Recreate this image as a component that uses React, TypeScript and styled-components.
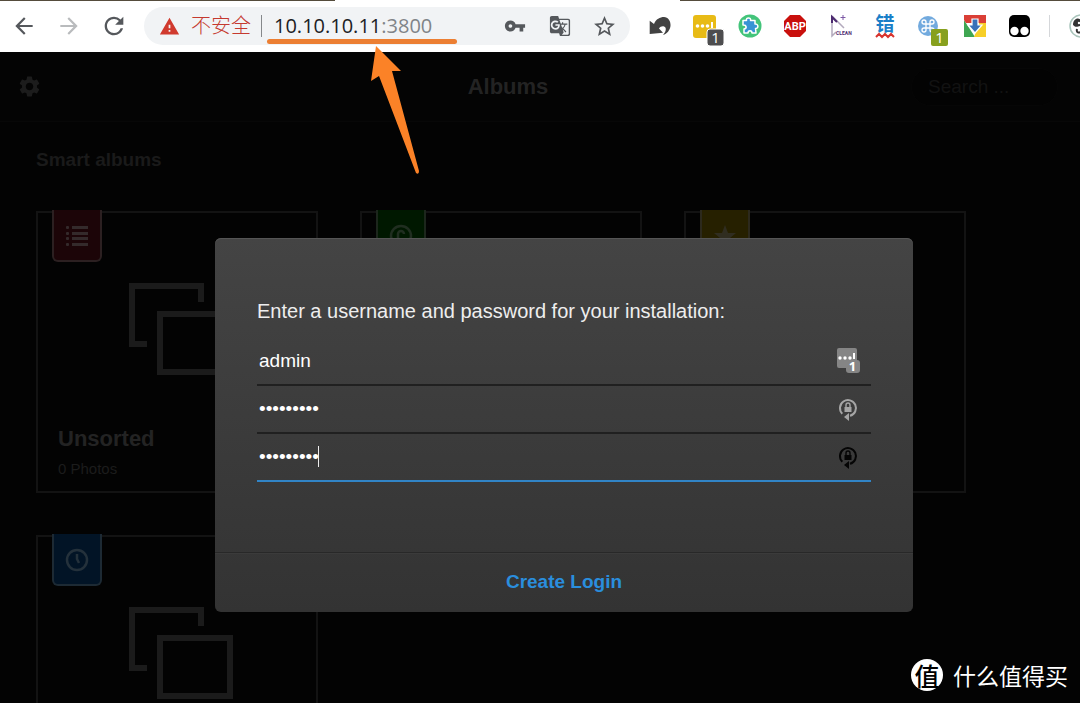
import React from "react";
import styled, { createGlobalStyle } from "styled-components";
import {
  MdArrowBack,
  MdArrowForward,
  MdGTranslate,
  MdRefresh,
  MdSettings,
  MdStarBorder,
  MdVpnKey,
  MdWarning,
} from "react-icons/md";

const GlobalStyle = createGlobalStyle`
  * { box-sizing: border-box; }
  html, body, #root { height: 100%; }
  body {
    margin: 0;
    overflow: hidden;
    background: #030303;
    font-family: "Liberation Sans", Arial, sans-serif;
  }
  button, input { font-family: inherit; }
  h1, h2, h3, p { margin: 0; }
  svg { display: block; flex: none; overflow: visible; }
`;

const Shell = styled.div`
  position: relative;
  display: flex;
  flex-direction: column;
  height: 100%;
  overflow: hidden;
`;

/* ---------- browser chrome ---------- */

const TabEdge = styled.div`
  display: flex;
  justify-content: space-between;
  height: 1px;
  background: #fff;
`;

const TabShade = styled.span<{ $share: number }>`
  width: ${(p) => p.$share}%;
  background: #554c3c;
`;

const Toolbar = styled.div`
  display: flex;
  align-items: center;
  flex: none;
  height: 51px;
  padding: 0 0 1px 1px;
  background: #fff;
  overflow: hidden;
`;

const ToolButton = styled.button<{ $tone?: string }>`
  display: flex;
  align-items: center;
  justify-content: center;
  flex: none;
  width: 45px;
  height: 40px;
  padding: 0;
  border: 0;
  background: none;
  color: ${(p) => p.$tone ?? "#55585c"};
`;

const AddressBar = styled.div`
  display: flex;
  align-items: center;
  flex: 1;
  min-width: 0;
  height: 38px;
  margin: 0 7px 0 8px;
  padding: 0 3px 0 15px;
  border-radius: 19px;
  background: #f1f3f5;
  font: 20px/38px "Open Sans", "Noto Sans CJK SC", sans-serif;
  white-space: nowrap;
`;

const Insecure = styled.span`
  margin-left: 11px;
  color: #c5392f;
  font-weight: 300;
`;

const AddressRule = styled.span`
  width: 1px;
  height: 22px;
  margin: 0 12px 0 10px;
  background: #85888b;
`;

const Address = styled.span`
  flex: 1;
  color: #202124;
`;

const Port = styled.span`
  color: #808488;
`;

const ToolDivider = styled.span`
  flex: none;
  width: 1px;
  height: 22px;
  margin: 0 19px 0 7px;
  background: #d5d7da;
`;

const AvatarButton = styled.button`
  flex: none;
  width: 11px;
  height: 24px;
  padding: 0;
  border: 0;
  background: none;
  overflow: hidden;
`;

/* ---------- gallery page ---------- */

const Gallery = styled.div`
  position: relative;
  flex: 1;
  min-height: 0;
  overflow: hidden;
  background: #030303;
`;

const GalleryHeader = styled.header`
  display: flex;
  align-items: center;
  height: 70px;
  padding-right: 22px;
  border-bottom: 1px solid #070707;
  background: #040404;
`;

const SettingsButton = styled.button`
  display: flex;
  width: 105px;
  padding: 0 0 0 17px;
  border: 0;
  background: none;
  color: #1c1c1c;
`;

const GalleryTitle = styled.h1`
  flex: 1;
  color: #232323;
  font-size: 22px;
  line-height: 30px;
  text-align: center;
`;

const SearchBox = styled.input`
  width: 147px;
  height: 38px;
  padding: 0 16px;
  border: 1px solid #060606;
  border-radius: 19px;
  background: #030303;
  color: #121212;
  font-size: 19px;
  &::placeholder { color: #121212; opacity: 1; }
`;

const Albums = styled.main`
  padding: 23px 36px 0;
`;

const SectionTitle = styled.h2`
  color: #1a1a1a;
  font-size: 19px;
  line-height: 30px;
`;

const AlbumGrid = styled.div`
  display: grid;
  grid-template-columns: repeat(auto-fill, 282px);
  gap: 42px;
  margin-top: 36px;
`;

const AlbumCard = styled.article`
  position: relative;
  height: 282px;
  padding: 70px 20px 0;
  border: 2px solid #131313;
  background: #030303;
`;

const AlbumArt = styled.svg`
  margin-left: 71px;
`;

const AlbumName = styled.h3`
  margin-top: 49px;
  color: #232323;
  font-size: 22px;
  line-height: 30px;
`;

const AlbumCount = styled.p`
  margin-top: 3px;
  color: #1c1c1c;
  font-size: 15px;
  line-height: 24px;
`;

const AlbumBadge = styled.span<{ $fill: string; $edge: string }>`
  position: absolute;
  top: -3px;
  left: 14px;
  display: flex;
  align-items: center;
  justify-content: center;
  width: 50px;
  height: 52px;
  padding-top: 2px;
  border: 2px solid ${(p) => p.$edge};
  border-top: 0;
  border-radius: 0 0 6px 6px;
  background: ${(p) => p.$fill};
`;

/* ---------- dialog ---------- */

const Overlay = styled.div`
  position: absolute;
  inset: 0;
  display: flex;
  align-items: flex-start;
  justify-content: center;
  padding: 186px 0 0 48px;
`;

const Dialog = styled.form`
  width: 100%;
  max-width: 698px;
  border-radius: 6px;
  background: linear-gradient(#444, #333);
  box-shadow: inset 0 1px 0 #555;
`;

const DialogBody = styled.div`
  height: 314px;
  padding: 58px 42px 0;
`;

const Prompt = styled.p`
  color: #eee;
  font-size: 20px;
  line-height: 30px;
`;

const Fields = styled.div`
  margin-top: 12px;
`;

const Field = styled.label<{ $active?: boolean }>`
  position: relative;
  display: flex;
  align-items: center;
  height: 48px;
  padding-right: 11px;
  border-bottom: 2px solid ${(p) => (p.$active ? "#3184c6" : "#202020")};
`;

const FieldInput = styled.input`
  flex: 1;
  min-width: 0;
  height: 40px;
  padding: 0 2px;
  border: 0;
  outline: 0;
  background: none;
  color: #fff;
  caret-color: transparent;
  font-size: 19px;
`;

const Caret = styled.span`
  position: absolute;
  top: 12px;
  left: 61px;
  width: 1px;
  height: 21px;
  background: #eee;
`;

const SubmitButton = styled.button`
  display: block;
  width: 100%;
  height: 60px;
  padding: 0 0 2px;
  border: 0;
  border-top: 1px solid #282828;
  border-radius: 0 0 6px 6px;
  box-shadow: inset 0 1px 0 #3b3b3b;
  background: none;
  color: #2a8edd;
  font-size: 19px;
  font-weight: bold;
`;

/* ---------- annotations over the page ---------- */

const Pointer = styled.svg`
  position: absolute;
  top: 38px;
  left: 266px;
`;

const Watermark = styled.div`
  position: absolute;
  right: 12px;
  bottom: 11px;
  display: flex;
  align-items: center;
  gap: 10px;
  color: #fff;
  font: 23px/34px "Noto Sans CJK SC", sans-serif;
`;

const Seal = styled.span`
  display: flex;
  align-items: center;
  justify-content: center;
  width: 32px;
  height: 32px;
  border-radius: 50%;
  background: #fff;
  color: #000;
  font-size: 25px;
  font-weight: 500;
`;

const cjk = '"Noto Sans CJK SC", sans-serif';

const UndoIcon = () => (
  <svg width="24" height="24" viewBox="0 0 24 24">
    <path
      d="M1.700 6.700 6 10C8 5 12 3 16 3C20 3 23 7 22.500 12C22 16 19 20 15 21C18 18 19 13.500 16 12.500C14 12 12 13 11 14.500L15 18.700 1.700 20Z"
      fill="#424242"
    />
  </svg>
);

const PasswordsIcon = () => (
  <svg width="34" height="34" viewBox="-2 -3 34 34">
    <rect x="3" y="3" width="23" height="23" rx="3" fill="#e8bb16" />
    <g fill="#fff">
      <circle cx="7.500" cy="14" r="1.800" />
      <circle cx="12.500" cy="14" r="1.800" />
      <circle cx="17.500" cy="14" r="1.800" />
      <rect x="21" y="10" width="2" height="6" />
    </g>
    <rect x="17" y="17" width="17" height="17" rx="3" fill="#4d4d4f" stroke="#fff" />
    <text x="25.500" y="31" textAnchor="middle" fill="#fff" fontSize="15" fontFamily="Open Sans, sans-serif">1</text>
  </svg>
);

const PuzzleIcon = () => (
  <svg width="24" height="24" viewBox="0 0 24 24">
    <circle cx="12" cy="12" r="11.500" fill="#43c47a" />
    <path
      d="M5 6.500H8.500C7.500 3 13.500 3 12.500 6.500H17V10C20.500 9.500 21 14.500 17.500 14.500L18 19H14C14 16 10 16 10 19H6V15C9 14.500 9 11 5 11Z"
      fill="#3793d5"
      stroke="#fff"
      strokeWidth="1.500"
      strokeLinejoin="round"
    />
  </svg>
);

const AdblockIcon = () => (
  <svg width="24" height="24" viewBox="0 0 24 24">
    <path d="M7 1H17L23 7V17L17 23H7L1 17V7Z" fill="#c9100d" />
    <text x="12" y="16" textAnchor="middle" fill="#fff" fontSize="11" fontWeight="700" fontFamily="Roboto, sans-serif">ABP</text>
  </svg>
);

const CleanIcon = () => (
  <svg width="24" height="24" viewBox="0 0 24 24">
    <path d="M4 2V22L8 18M4 2 16 14" fill="none" stroke="#b3aabd" strokeWidth="1.500" />
    <path d="M4 9V3L9 8" fill="none" stroke="#4c2a70" strokeWidth="2" />
    <path d="M15 1V6M12.500 3.500H17.500" stroke="#7c58a5" />
    <text x="8" y="21" fill="#4c2a70" fontSize="5" fontWeight="700" fontFamily="Roboto, sans-serif">CLEAN</text>
  </svg>
);

const TypoIcon = () => (
  <svg width="24" height="24" viewBox="0 0 24 24">
    <text x="12" y="17" textAnchor="middle" fill="#1a7fc8" fontSize="19" fontWeight="700" fontFamily={cjk}>错</text>
    <path d="M3 23 6 20 9 23 12 20 15 23 18 20 21 23" fill="none" stroke="#d8332d" strokeWidth="2" />
  </svg>
);

const ShortcutIcon = () => (
  <svg width="34" height="34" viewBox="-2 -3 34 34">
    <circle cx="13" cy="14" r="10" fill="#72aade" />
    <path
      d="M11 12H15V16H11ZM11 12V10A2 2 0 1 0 9 12H11M15 12H17A2 2 0 1 0 15 10V12M15 16V18A2 2 0 1 0 17 16H15M11 16H9A2 2 0 1 0 11 18V16"
      fill="none"
      stroke="#fff"
      strokeWidth="1.300"
    />
    <rect x="16" y="17" width="17" height="17" rx="2" fill="#87a01e" />
    <text x="24.500" y="31" textAnchor="middle" fill="#fff" fontSize="15" fontFamily="Open Sans, sans-serif">1</text>
  </svg>
);

const DownloadIcon = () => (
  <svg width="24" height="24" viewBox="0 0 24 24">
    <path d="M1 6 12 23H1Z" fill="#3fa652" />
    <path d="M23 7V23H11L17 7Z" fill="#f7cf28" />
    <path d="M1 1H23V9H3L1 6Z" fill="#da3f36" />
    <path d="M9 5H15V11H19L12 19 5 11H9Z" fill="#3970b8" stroke="#fff" strokeWidth="1.200" />
  </svg>
);

const MonkeyIcon = () => (
  <svg width="24" height="24" viewBox="0 0 24 24">
    <rect x="1" y="1" width="21" height="22" rx="5" fill="#000" />
    <circle cx="6.500" cy="17" r="4.200" fill="#fff" />
    <circle cx="16.500" cy="17" r="4.200" fill="#fff" />
  </svg>
);

const AvatarIcon = () => (
  <svg width="24" height="24" viewBox="0 0 24 24">
    <circle cx="12" cy="12" r="11" fill="#fff" stroke="#a9c4bb" strokeWidth="1.500" />
    <path d="M4 11C4 5 9 3 12 6L13 12C9 11 8 15 4 11Z" fill="#333" />
    <circle cx="10" cy="9" r="1.200" fill="#fff" />
    <path d="M8 15C7 19 10 19 12 18" fill="none" stroke="#333" strokeWidth="2" />
  </svg>
);

const FilledEntryIcon = () => (
  <svg width="24" height="28" viewBox="0 0 24 28">
    <rect x="1" y="1" width="20" height="20" rx="2" fill="#858585" />
    <g fill="#fff">
      <circle cx="4" cy="11" r="1.700" />
      <circle cx="9" cy="11" r="1.700" />
      <circle cx="14" cy="11" r="1.700" />
      <rect x="17" y="6" width="2" height="6" />
    </g>
    <rect x="10" y="13" width="14" height="13" rx="3" fill="#858585" />
    <text x="16.500" y="24" textAnchor="middle" fill="#fff" fontSize="13" fontWeight="700" fontFamily="Open Sans, sans-serif">1</text>
  </svg>
);

const GenerateIcon = ({ color }: { color: string }) => (
  <svg width="24" height="24" viewBox="0 0 24 24">
    <path d="M6.300 16.700A8 8 0 1 1 14 18.800" fill="none" stroke={color} strokeWidth="2" />
    <path d="M8 20 13 16V24Z" fill={color} />
    <rect x="8.500" y="10" width="7" height="5" fill={color} />
    <path d="M10 10V8A2 2 0 0 1 14 8V10" fill="none" stroke={color} strokeWidth="1.400" />
  </svg>
);

const ListGlyph = () => (
  <svg width="24" height="24" viewBox="0 0 24 24" fill="#342a2b">
    {[2, 8, 13, 19].map((y) => (
      <g key={y}>
        <rect x="1" y={y} width="3" height="3" rx="1" />
        <rect x="7" y={y} width="16" height="3" />
      </g>
    ))}
  </svg>
);

const ShareGlyph = () => (
  <svg width="24" height="24" viewBox="0 0 24 24" fill="none" stroke="#202e20" strokeWidth="2.500">
    <circle cx="12" cy="12" r="10" />
    <path d="M9 18V10A3 3 0 0 1 15 10" />
  </svg>
);

const StarGlyph = () => (
  <svg width="24" height="24" viewBox="0 0 24 24">
    <path d="M12 1 15 9H23L17 14 19 22 12 17 5 22 7 14 1 9H9Z" fill="#302d20" />
  </svg>
);

const ClockGlyph = () => (
  <svg width="24" height="24" viewBox="0 0 24 24" fill="none" stroke="#24313b" strokeWidth="2.500">
    <circle cx="12" cy="12" r="10" />
    <path d="M12 6V11L14 15" />
  </svg>
);

type Album = {
  id: number;
  name?: string;
  fill: string;
  edge: string;
  glyph: React.ReactNode;
};

const smartAlbums: Album[] = [
  { id: 1, name: "Unsorted", fill: "#1c0508", edge: "#2c2021", glyph: <ListGlyph /> },
  { id: 2, fill: "#001800", edge: "#1c261c", glyph: <ShareGlyph /> },
  { id: 3, fill: "#262000", edge: "#2c291d", glyph: <StarGlyph /> },
  { id: 4, fill: "#021426", edge: "#1d2a34", glyph: <ClockGlyph /> },
];

const extensions = [
  { label: "Undo", icon: <UndoIcon /> },
  { label: "Passwords", icon: <PasswordsIcon /> },
  { label: "Extensions", icon: <PuzzleIcon /> },
  { label: "Adblock", icon: <AdblockIcon /> },
  { label: "Clean", icon: <CleanIcon /> },
  { label: "Typo", icon: <TypoIcon /> },
  { label: "Shortcuts", icon: <ShortcutIcon /> },
  { label: "Downloads", icon: <DownloadIcon /> },
  { label: "Scripts", icon: <MonkeyIcon /> },
];

export default function App() {
  return (
    <Shell>
      <GlobalStyle />
      <TabEdge>
        <TabShade $share={31} />
        <TabShade $share={37} />
      </TabEdge>
      <Toolbar>
        <ToolButton aria-label="Back"><MdArrowBack size={26} /></ToolButton>
        <ToolButton aria-label="Forward" $tone="#b9bbbd"><MdArrowForward size={26} /></ToolButton>
        <ToolButton aria-label="Reload"><MdRefresh size={28} /></ToolButton>
        <AddressBar>
          <MdWarning size={21} color="#d03a2e" />
          <Insecure>不安全</Insecure>
          <AddressRule />
          <Address>10.10.10.11<Port>:3800</Port></Address>
          <ToolButton aria-label="Saved passwords"><MdVpnKey size={22} /></ToolButton>
          <ToolButton aria-label="Translate"><MdGTranslate size={22} /></ToolButton>
          <ToolButton aria-label="Bookmark"><MdStarBorder size={25} /></ToolButton>
        </AddressBar>
        {extensions.map((e) => (
          <ToolButton key={e.label} aria-label={e.label}>{e.icon}</ToolButton>
        ))}
        <ToolDivider />
        <AvatarButton aria-label="Profile"><AvatarIcon /></AvatarButton>
      </Toolbar>

      <Gallery>
        <GalleryHeader>
          <SettingsButton aria-label="Settings"><MdSettings size={25} /></SettingsButton>
          <GalleryTitle>Albums</GalleryTitle>
          <SearchBox type="text" aria-label="Search" placeholder="Search ..." />
        </GalleryHeader>
        <Albums>
          <SectionTitle>Smart albums</SectionTitle>
          <AlbumGrid>
            {smartAlbums.map((a) => (
              <AlbumCard key={a.id}>
                <AlbumBadge $fill={a.fill} $edge={a.edge}>{a.glyph}</AlbumBadge>
                <AlbumArt width="104" height="92" viewBox="0 0 104 92" fill="none" stroke="#1b1b1b" strokeWidth="6">
                  <path d="M72 19V3H3V61H18" />
                  <rect x="31" y="31" width="70" height="58" />
                </AlbumArt>
                {a.name && (
                  <>
                    <AlbumName>{a.name}</AlbumName>
                    <AlbumCount>0 Photos</AlbumCount>
                  </>
                )}
              </AlbumCard>
            ))}
          </AlbumGrid>
        </Albums>

        <Overlay>
          <Dialog onSubmit={(e) => e.preventDefault()}>
            <DialogBody>
              <Prompt>Enter a username and password for your installation:</Prompt>
              <Fields>
                <Field>
                  <FieldInput type="text" aria-label="Username" defaultValue="admin" />
                  <FilledEntryIcon />
                </Field>
                <Field>
                  <FieldInput type="password" aria-label="Password" defaultValue="adminpass" />
                  <GenerateIcon color="#a5a5a5" />
                </Field>
                <Field $active>
                  <FieldInput type="password" aria-label="Confirm password" defaultValue="adminpass" />
                  <Caret />
                  <GenerateIcon color="#050505" />
                </Field>
              </Fields>
            </DialogBody>
            <SubmitButton type="submit">Create Login</SubmitButton>
          </Dialog>
        </Overlay>
      </Gallery>

      <Pointer width="192" height="138" viewBox="0 0 192 138" fill="#fb8227" aria-hidden="true">
        <rect x="1" y="1" width="190" height="5" rx="2.500" fill="#ec7f33" />
        <path d="M110 8 135 33 126 33 153 133Q153 137 150 135L113 38 105 43Z" />
      </Pointer>

      <Watermark>
        <Seal>值</Seal>
        <span>什么值得买</span>
      </Watermark>
    </Shell>
  );
}
